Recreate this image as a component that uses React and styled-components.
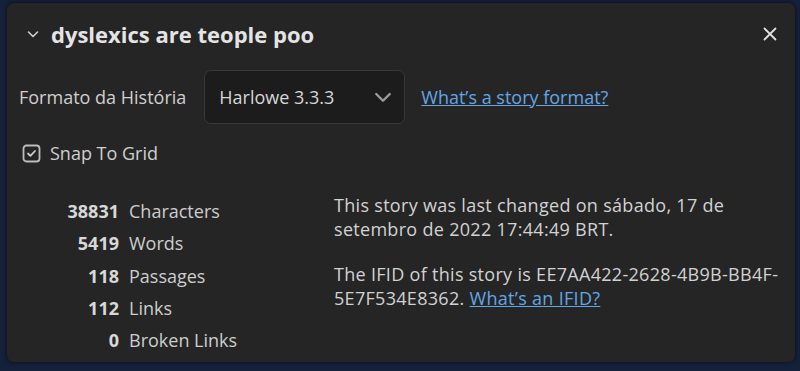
import React from "react";
import styled, { createGlobalStyle } from "styled-components";

const Global = createGlobalStyle`
  html, body {
    margin: 0;
    padding: 0;
    background: #15203a;
    height: 100%;
  }
  body {
    font-family: "Open Sans", "Noto Sans", sans-serif;
    color: #d2d2d2;
    overflow: hidden;
  }
`;

const Dialog = styled.div`
  box-sizing: border-box;
  margin: 3px 5px 0 7px;
  width: 788px;
  height: 359px;
  background: #252525;
  border-radius: 7px;
  box-shadow: 0 0 4px rgba(0, 0, 0, 0.6);
  display: flex;
  flex-direction: column;
`;

const TitleBar = styled.div`
  display: flex;
  align-items: center;
  height: 61px;
  padding: 0 16px 0 18px;
`;

const Title = styled.h1`
  flex: 1;
  margin: 0 0 0 10px;
  font-size: 22px;
  font-weight: 700;
  color: #e4e4e4;
`;

const IconButton = styled.button`
  background: none;
  border: 0;
  padding: 0;
  display: flex;
  color: #dcdcdc;
`;

const Body = styled.div`
  padding: 0 14px 0 12px;
  display: flex;
  flex-direction: column;
`;

const FormatRow = styled.div`
  display: flex;
  align-items: center;
  gap: 16px;
  margin-top: 6px;
`;

const Label = styled.span`
  font-size: 18px;
  color: #cfcfcf;
  margin-right: 2px;
`;

const Select = styled.div`
  box-sizing: border-box;
  width: 201px;
  height: 54px;
  display: flex;
  align-items: center;
  justify-content: space-between;
  padding: 0 9px 0 14px;
  background: #1c1c1c;
  border: 1px solid #383838;
  border-radius: 7px;
  font-size: 18px;
  color: #d6d6d6;
`;

const Link = styled.a`
  color: #62a6e6;
  text-decoration: underline;
  font-size: 18px;
  cursor: pointer;
`;

const CheckRow = styled.label`
  display: flex;
  align-items: center;
  gap: 9px;
  margin: 17px 0 0 3px;
  font-size: 18px;
  color: #cfcfcf;
`;

const Columns = styled.div`
  display: grid;
  grid-template-columns: 315px 1fr;
  margin-top: 30px;
`;

const Stats = styled.div`
  display: grid;
  grid-template-columns: 100px auto;
  column-gap: 10px;
  align-content: start;
`;

const Num = styled.span`
  text-align: right;
  font-weight: 700;
  font-size: 18px;
  line-height: 32.3px;
  color: #d8d8d8;
`;

const StatLabel = styled.span`
  font-size: 18px;
  line-height: 32.3px;
  color: #cdcdcd;
`;

const Info = styled.div`
  font-size: 18px;
  line-height: 24px;
  letter-spacing: 0.3px;
  color: #d2d2d2;
  margin-top: -2px;
`;

const Para = styled.p`
  margin: 0 0 21px;
`;

const stats = [
  ["38831", "Characters"],
  ["5419", "Words"],
  ["118", "Passages"],
  ["112", "Links"],
  ["0", "Broken Links"],
];

const Chevron = ({ size = 16, color = "currentColor" }) => (
  <svg width={size} height={size} viewBox="0 0 16 16" fill="none">
    <path d="M3.5 6 L8 10.5 L12.5 6" stroke={color} strokeWidth="1.6" strokeLinecap="round" strokeLinejoin="round" />
  </svg>
);

const Close = () => (
  <svg width="18" height="18" viewBox="0 0 18 18" fill="none">
    <path d="M3.5 3.5 L14.5 14.5 M14.5 3.5 L3.5 14.5" stroke="#e0e0e0" strokeWidth="1.8" strokeLinecap="round" />
  </svg>
);

const CheckIcon = () => (
  <svg width="19" height="19" viewBox="0 0 19 19" fill="none">
    <rect x="1.5" y="1.5" width="16" height="16" rx="3" stroke="#bdbdbd" strokeWidth="1.8" />
    <path d="M6 9.5 L8.4 11.8 L13 7" stroke="#cfcfcf" strokeWidth="1.8" strokeLinecap="round" strokeLinejoin="round" />
  </svg>
);

export default function App() {
  return (
    <>
      <Global />
      <Dialog>
        <TitleBar>
          <IconButton>
            <Chevron size={16} color="#cfcfcf" />
          </IconButton>
          <Title>dyslexics are teople poo</Title>
          <IconButton>
            <Close />
          </IconButton>
        </TitleBar>
        <Body>
          <FormatRow>
            <Label>Formato da História</Label>
            <Select>
              Harlowe 3.3.3
              <Chevron size={24} color="#9a9a9a" />
            </Select>
            <Link>What’s a story format?</Link>
          </FormatRow>
          <CheckRow>
            <CheckIcon />
            Snap To Grid
          </CheckRow>
          <Columns>
            <Stats>
              {stats.map(([n, l]) => (
                <React.Fragment key={l}>
                  <Num>{n}</Num>
                  <StatLabel>{l}</StatLabel>
                </React.Fragment>
              ))}
            </Stats>
            <Info>
              <Para>
                This story was last changed on sábado, 17 de setembro de 2022
                17:44:49 BRT.
              </Para>
              <Para>
                The IFID of this story is EE7AA422-2628-4B9B-BB4F-5E7F534E8362.{" "}
                <Link>What’s an IFID?</Link>
              </Para>
            </Info>
          </Columns>
        </Body>
      </Dialog>
    </>
  );
}
